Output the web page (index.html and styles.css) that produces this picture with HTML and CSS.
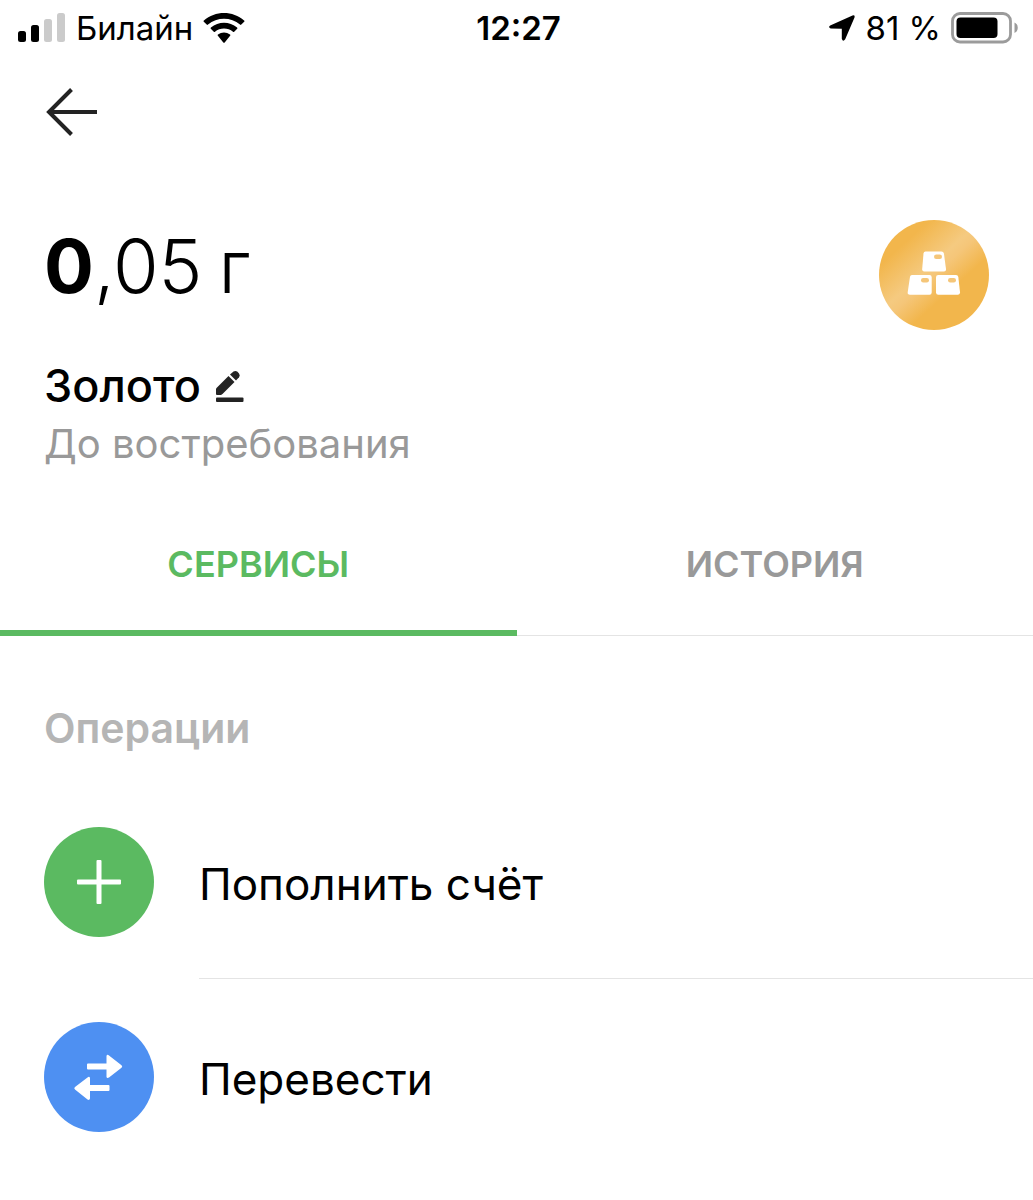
FILE: index.html
```html
<!DOCTYPE html>
<html lang="ru">
<head>
<meta charset="utf-8">
<meta name="viewport" content="width=device-width, initial-scale=1">
<title>Золото</title>
<link rel="stylesheet" href="styles.css">
</head>
<body>
<header class="status">
  <div class="status-side">
    <svg class="signal" width="48" height="30" viewBox="0 0 48 30" aria-hidden="true">
      <rect x="0" y="18" width="8" height="11" rx="2.5"/>
      <rect x="13" y="12" width="8" height="17" rx="2.5"/>
      <rect x="26" y="6" width="8" height="23" rx="2.5" fill="#cbcbcb"/>
      <rect x="39" y="0" width="8" height="29" rx="2.5" fill="#cbcbcb"/>
    </svg>
    <span class="carrier">Билайн</span>
    <svg width="42" height="30" viewBox="0 0 42 30" aria-hidden="true">
      <path d="M.8 8.8Q.2 8.100.9 7.500C12-2.500 30-2.500 41.100 7.500Q41.800 8.100 41.200 8.800L38.300 11.600Q37.700 12.200 37 11.600C28 3.800 14 3.800 5 11.600Q4.300 12.200 3.700 11.600Z"/>
      <path d="M7.800 15.800Q7.200 15.200 7.900 14.500C15.500 8 26.500 8 34.100 14.500Q34.800 15.200 34.200 15.800L31.200 18.700Q30.600 19.200 30 18.700C25 14.400 17 14.400 12 18.700Q11.400 19.200 10.800 18.700Z"/>
      <path d="M14.900 22.700Q14.300 22.100 15 21.500C18.500 18.700 23.500 18.700 27 21.500Q27.700 22.100 27.100 22.700L21.700 29.500Q21 30.200 20.300 29.500Z"/>
    </svg>
  </div>
  <time class="clock">12:27</time>
  <div class="status-side status-end">
    <svg width="26" height="26" viewBox="0 0 26 26" aria-hidden="true">
      <path d="M1.200 10.500 23.500.5Q26.200-.2 25.500 2.500L16.200 24.200Q14 27.300 12.800 23.800L12.800 13.800 1.700 13.500Q-1.200 12.300 1.200 10.500Z"/>
    </svg>
    <span>81 %</span>
    <svg width="68" height="32" viewBox="0 0 68 32" aria-hidden="true">
      <rect x="1.500" y="1.500" width="58" height="28.500" rx="7.500" fill="none" stroke="#9b9b9b" stroke-width="2.800"/>
      <rect x="5.500" y="5.500" width="41" height="20.500" rx="4"/>
      <path d="M63.500 10.500Q66.800 12 66.800 15.800T63.500 21Z" fill="#9b9b9b"/>
    </svg>
  </div>
</header>

<nav class="nav">
  <button class="back" type="button" aria-label="Назад">
    <svg width="52" height="48" viewBox="0 0 52 48" fill="none" stroke="#232323" stroke-width="4" aria-hidden="true">
      <path d="M26.500 1.500 4 24 26.500 46.500M4 24H52"/>
    </svg>
  </button>
</nav>

<main>
  <section class="account">
    <div class="info">
      <p class="amount"><span><b>0</b>,05</span> <span>г</span></p>
      <div class="title">
        <h1>Золото</h1>
        <button class="edit" type="button" aria-label="Переименовать">
          <svg width="30" height="32" viewBox="0 0 30 32" fill="#232323" aria-hidden="true">
            <path d="M2 25Q1 25 1 24V18.500L13.500 6 19.500 12 7.500 24 6 25Z"/>
            <path d="M15 4.500 18.500 1.500Q20.500.2 22.500 1.700L24 3.400Q25.500 5.300 24 7.300L21 10.500Z"/>
            <rect x="1" y="27.500" width="27.500" height="4.500" rx="1"/>
          </svg>
        </button>
      </div>
      <p class="terms">До востребования</p>
    </div>
    <svg class="coin" width="110" height="110" viewBox="0 0 110 110" aria-hidden="true">
      <defs>
        <linearGradient id="gold" x1=".12" y1=".08" x2=".88" y2=".92">
          <stop offset=".15" stop-color="#f2b64c"/>
          <stop offset=".43" stop-color="#f5ca80"/>
          <stop offset=".5" stop-color="#f5c679"/>
          <stop offset=".68" stop-color="#f2b64c"/>
        </linearGradient>
      </defs>
      <circle cx="55" cy="55" r="55" fill="url(#gold)"/>
      <g fill="#fff">
        <path d="M46.500 31.500H62.500Q64.500 31.500 64.900 33.500L67 49Q67.200 51.500 65 51.500H45.200Q43 51.500 43.200 49L44.500 33.500Q44.700 31.500 46.500 31.500Z"/>
        <path d="M33 55H50.500Q52.700 55 52.700 57.200V72.500Q52.700 74.700 50.500 74.700H31Q28.200 74.700 28.700 72.300L31 56.700Q31.300 55 33 55Z"/>
        <path d="M59.300 55H77Q79 55 79.300 57L81 72.300Q81.200 74.700 79 74.700H59.300Q57 74.700 57 72.500V57.200Q57 55 59.300 55Z"/>
      </g>
      <g fill="#f5c679">
        <rect x="55" y="34.500" width="8" height="4.500" rx="2.200"/>
        <rect x="42" y="58" width="8" height="4.500" rx="2.200"/>
        <rect x="69" y="58" width="8" height="4.500" rx="2.200"/>
      </g>
    </svg>
  </section>

  <div class="tabs" role="tablist">
    <button class="tab active" type="button" role="tab" aria-selected="true">СЕРВИСЫ</button>
    <button class="tab" type="button" role="tab" aria-selected="false">ИСТОРИЯ</button>
  </div>

  <section class="operations">
    <h2>Операции</h2>
    <ul>
      <li>
        <button class="row" type="button">
          <svg width="110" height="110" viewBox="0 0 110 110" aria-hidden="true">
            <circle cx="55" cy="55" r="55" fill="#5bba61"/>
            <rect x="33" y="52.500" width="44" height="5" rx="1" fill="#fff"/>
            <rect x="52.500" y="33" width="5" height="44" rx="1" fill="#fff"/>
          </svg>
          <span class="label">Пополнить счёт</span>
        </button>
      </li>
      <li>
        <button class="row" type="button">
          <svg width="110" height="110" viewBox="0 0 110 110" aria-hidden="true">
            <circle cx="55" cy="55" r="55" fill="#4e90f2"/>
            <path fill="#fff" d="M44 41.500H62.500V34Q63 32 65 33.500L77.500 43.200Q79 44.500 77.500 45.700L65 55.500Q63 56.700 62.500 55V47.500H44Q43 47.500 43 46.500V42.500Q43 41.500 44 41.500Z"/>
            <path fill="#fff" d="M64.500 63H46V56Q45.500 54 43.500 55.500L31 65Q29.500 66.200 31 67.500L43.500 77.500Q45.500 78.700 46 76.500V69H64.500Q65.500 69 65.500 68V64Q65.500 63 64.500 63Z"/>
          </svg>
          <span class="label">Перевести</span>
        </button>
      </li>
    </ul>
  </section>
</main>
</body>
</html>
```
FILE: styles.css
```css
* {
  box-sizing: border-box;
}

body {
  margin: 0;
  background: #fff;
  color: #000;
  font-family: Inter, "Liberation Sans", sans-serif;
}

h1, h2, p, ul {
  margin: 0;
  padding: 0;
}

button {
  margin: 0;
  padding: 0;
  border: 0;
  background: none;
  color: inherit;
  font: inherit;
  cursor: pointer;
}

svg {
  display: block;
  flex: none;
}

.status {
  display: grid;
  grid-template-columns: 1fr auto 1fr;
  align-items: center;
  height: 56px;
  padding: 0 14px 0 18px;
  font-size: 33px;
  line-height: 40px;
}

.status-side {
  display: flex;
  align-items: center;
  gap: 10px;
}

.status-end {
  justify-content: flex-end;
}

.clock {
  font-weight: 600;
}

.nav {
  padding: 32px 45px;
}

.back {
  display: block;
}

.account {
  display: flex;
  justify-content: space-between;
  align-items: flex-start;
  padding: 52px 44px 0;
}

.amount {
  display: flex;
  gap: 16px;
  font-size: 74px;
  font-weight: 300;
  line-height: 92px;
}

.amount b {
  font-weight: 700;
}

.title {
  display: flex;
  align-items: center;
  gap: 14px;
  margin-top: 44px;
}

h1 {
  font-size: 45px;
  font-weight: 500;
  line-height: 60px;
}

.terms {
  color: #999;
  font-size: 40px;
  line-height: 56px;
}

.tabs {
  display: grid;
  grid-template-columns: 1fr 1fr;
  margin-top: 20px;
  box-shadow: inset 0 -1px #e4e4e4;
}

.tab {
  height: 144px;
  padding-top: 6px;
  border-bottom: 6px solid transparent;
  color: #999;
  font-size: 36px;
  font-weight: 600;
}

.active {
  border-bottom-color: #5bba61;
  color: #5bba61;
}

.operations {
  padding: 64px 0 42px 44px;
}

h2 {
  color: #b5b5b5;
  font-size: 41px;
  font-weight: 600;
  line-height: 56px;
}

ul {
  margin-top: 28px;
  list-style: none;
}

.row {
  display: flex;
  align-items: center;
  gap: 45px;
  width: 100%;
  font-size: 44px;
  text-align: left;
}

.label {
  flex: 1;
  display: flex;
  align-items: center;
  height: 195px;
  padding-top: 4px;
}

li:not(:last-child) .label {
  box-shadow: inset 0 -1px #e4e4e4;
}
```
